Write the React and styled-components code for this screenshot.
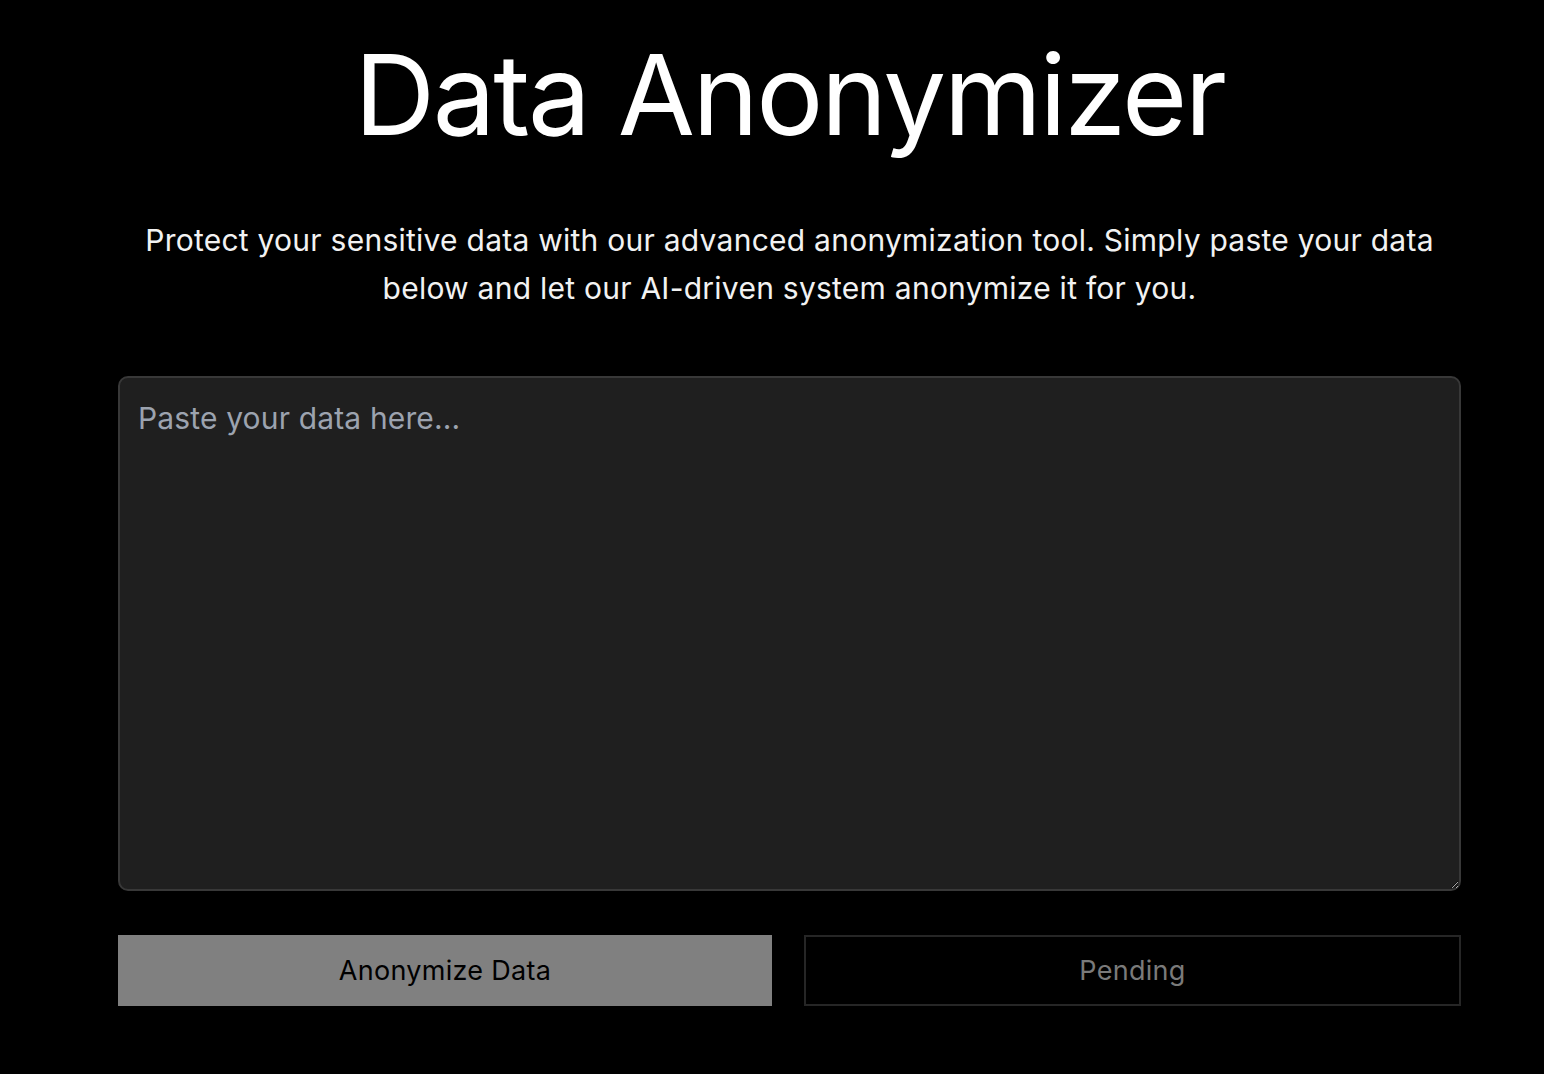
import React, { useState } from 'react';
import styled, { createGlobalStyle } from 'styled-components';

const GlobalStyle = createGlobalStyle`
  html, body {
    margin: 0;
    padding: 0;
    background: #000000;
  }

  body {
    font-family: Inter, "Noto Sans", "Liberation Sans", sans-serif;
    color: #ffffff;
  }

  * {
    box-sizing: border-box;
  }
`;

const Page = styled.main`
  min-height: 100vh;
  padding: 0 0 40px 35px;
`;

const Content = styled.div`
  width: 1343px;
  margin: 0 auto;
  display: flex;
  flex-direction: column;
  align-items: center;
`;

const Title = styled.h1`
  margin: 27px 0 0;
  font-size: 112px;
  font-weight: 400;
  line-height: 1.2;
  letter-spacing: -2.4px;
  color: #ffffff;
`;

const Intro = styled.p`
  margin: 55px 0 0;
  max-width: 1320px;
  font-size: 30px;
  line-height: 48px;
  letter-spacing: 0.25px;
  text-align: center;
  color: #f2f2f2;
`;

const DataInput = styled.textarea`
  width: 100%;
  height: 515px;
  margin-top: 64px;
  padding: 19px 18px 16px;
  background: #1f1f1f;
  border: 2px solid #383838;
  border-radius: 10px;
  color: #ffffff;
  font-family: inherit;
  font-size: 30px;
  line-height: 1.4;
  letter-spacing: 0.15px;
  resize: vertical;

  &:focus {
    outline: none;
    border-color: #4a4a4a;
  }

  &::placeholder {
    color: #9ca3af;
  }
`;

const ButtonRow = styled.div`
  width: 100%;
  margin-top: 44px;
  display: grid;
  grid-template-columns: 654px 1fr;
  gap: 32px;
`;

const ActionButton = styled.button`
  height: 71px;
  font-family: inherit;
  font-size: 27px;
  font-weight: 400;
  letter-spacing: 0.3px;
  cursor: pointer;
  background: ${(p) => (p.$primary ? '#808080' : '#000000')};
  color: ${(p) => (p.$primary ? '#000000' : '#7a7a7a')};
  border: ${(p) => (p.$primary ? 'none' : '2px solid #262626')};
`;

export default function App() {
  const [data, setData] = useState('');

  return (
    <Page>
      <GlobalStyle />
      <Content>
        <Title>Data Anonymizer</Title>
        <Intro>
          Protect your sensitive data with our advanced anonymization tool. Simply paste your data
          below and let our AI-driven system anonymize it for you.
        </Intro>
        <DataInput
          value={data}
          onChange={(e) => setData(e.target.value)}
          placeholder="Paste your data here..."
        />
        <ButtonRow>
          <ActionButton $primary type="button">Anonymize Data</ActionButton>
          <ActionButton type="button" disabled>Pending</ActionButton>
        </ButtonRow>
      </Content>
    </Page>
  );
}
